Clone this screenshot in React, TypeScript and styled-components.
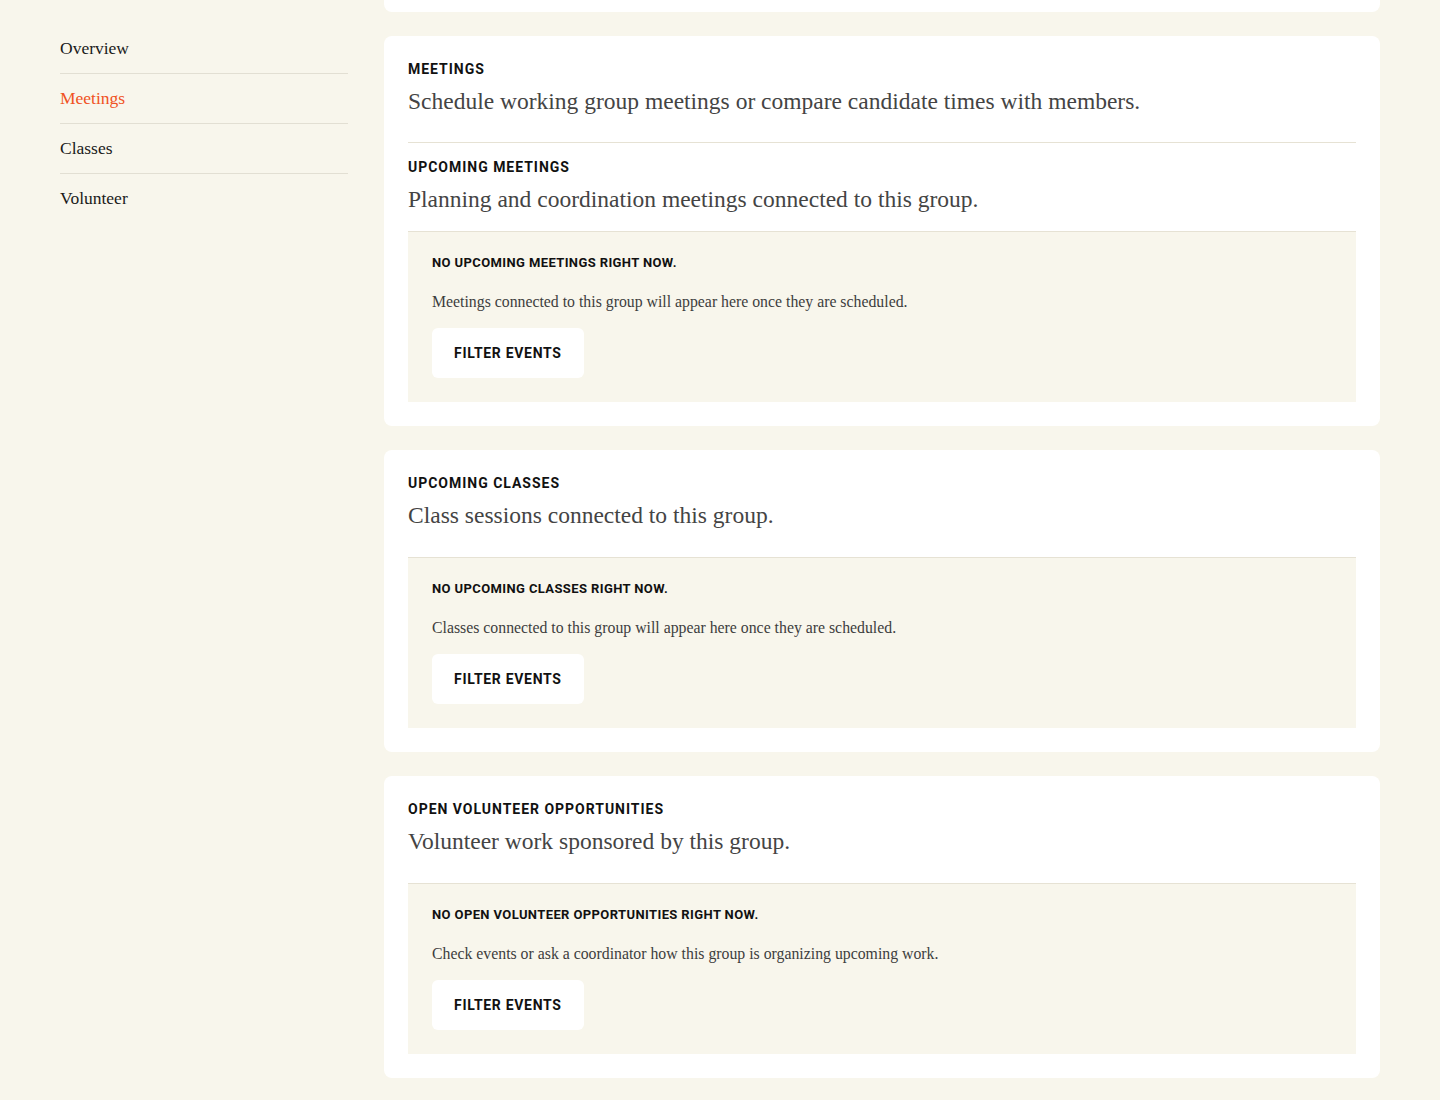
import React from 'react';
import styled, { createGlobalStyle } from 'styled-components';

const GlobalStyle = createGlobalStyle`
    html, body {
        margin: 0;
        padding: 0;
        background: #f8f6ec;
    }
    body {
        font-family: "Liberation Serif", "Times New Roman", serif;
        color: #1a1a1a;
    }
`;

const Page = styled.div`
    display: flex;
    align-items: flex-start;
    gap: 36px;
    padding: 0 60px 24px 60px;
`;

const Sidebar = styled.nav`
    width: 288px;
    flex-shrink: 0;
    margin-top: 24px;
    display: flex;
    flex-direction: column;
`;

const NavItem = styled.a<{ $active?: boolean }>`
    display: block;
    padding: 12px 0 13px 0;
    font-size: 17.5px;
    line-height: 24px;
    color: ${({ $active }) => ($active ? '#f05223' : '#1a1a1a')};
    text-decoration: none;
    border-bottom: 1px solid #e2dfd3;
    &:last-child {
        border-bottom: none;
    }
`;

const Main = styled.main`
    flex: 1;
    display: flex;
    flex-direction: column;
    gap: 24px;
`;

const CardTail = styled.div`
    height: 12px;
    background: #fff;
    border-radius: 0 0 8px 8px;
`;

const Card = styled.section`
    background: #fff;
    border-radius: 8px;
    padding: 24px;
`;

const Label = styled.h2`
    margin: 0;
    font-family: Roboto, "Liberation Sans", sans-serif;
    font-weight: 700;
    font-size: 14px;
    line-height: 18px;
    letter-spacing: 0.07em;
    text-transform: uppercase;
    color: #111;
`;

const Lead = styled.p<{ $after?: number }>`
    margin: 8px 0 ${({ $after }) => $after ?? 26}px 0;
    font-size: 23.5px;
    line-height: 31px;
    color: #444;
`;

const Divider = styled.hr`
    margin: 0 0 15px 0;
    border: none;
    border-top: 1px solid #e6e2d4;
`;

const Empty = styled.div`
    background: #f8f6ec;
    border-top: 1px solid #e6e2d4;
    padding: 24px;
`;

const EmptyTitle = styled.h3`
    margin: 0;
    font-family: Roboto, "Liberation Sans", sans-serif;
    font-weight: 700;
    font-size: 13px;
    line-height: 14px;
    letter-spacing: 0.03em;
    text-transform: uppercase;
    color: #111;
`;

const EmptyText = styled.p`
    margin: 21px 0 15px 0;
    font-size: 15.8px;
    line-height: 22px;
    color: #3d3d3d;
`;

const Button = styled.button`
    height: 50px;
    padding: 0 22px;
    background: #fff;
    border: none;
    border-radius: 6px;
    font-family: Roboto, "Liberation Sans", sans-serif;
    font-weight: 700;
    font-size: 14px;
    letter-spacing: 0.05em;
    text-transform: uppercase;
    color: #111;
    cursor: pointer;
`;

type EmptyProps = { title: string; text: string };

function EmptyState({ title, text }: EmptyProps) {
    return (
        <Empty>
            <EmptyTitle>{title}</EmptyTitle>
            <EmptyText>{text}</EmptyText>
            <Button>Filter events</Button>
        </Empty>
    );
}

function App() {
    return (
        <>
            <GlobalStyle />
            <Page>
                <Sidebar>
                    <NavItem href="#overview">Overview</NavItem>
                    <NavItem href="#meetings" $active>Meetings</NavItem>
                    <NavItem href="#classes">Classes</NavItem>
                    <NavItem href="#volunteer">Volunteer</NavItem>
                </Sidebar>
                <Main>
                    <CardTail />
                    <Card>
                        <Label>Meetings</Label>
                        <Lead $after={25}>Schedule working group meetings or compare candidate times with members.</Lead>
                        <Divider />
                        <Label>Upcoming meetings</Label>
                        <Lead $after={16}>Planning and coordination meetings connected to this group.</Lead>
                        <EmptyState
                            title="No upcoming meetings right now."
                            text="Meetings connected to this group will appear here once they are scheduled."
                        />
                    </Card>
                    <Card>
                        <Label>Upcoming classes</Label>
                        <Lead>Class sessions connected to this group.</Lead>
                        <EmptyState
                            title="No upcoming classes right now."
                            text="Classes connected to this group will appear here once they are scheduled."
                        />
                    </Card>
                    <Card>
                        <Label>Open volunteer opportunities</Label>
                        <Lead>Volunteer work sponsored by this group.</Lead>
                        <EmptyState
                            title="No open volunteer opportunities right now."
                            text="Check events or ask a coordinator how this group is organizing upcoming work."
                        />
                    </Card>
                </Main>
            </Page>
        </>
    );
}

export default App;
